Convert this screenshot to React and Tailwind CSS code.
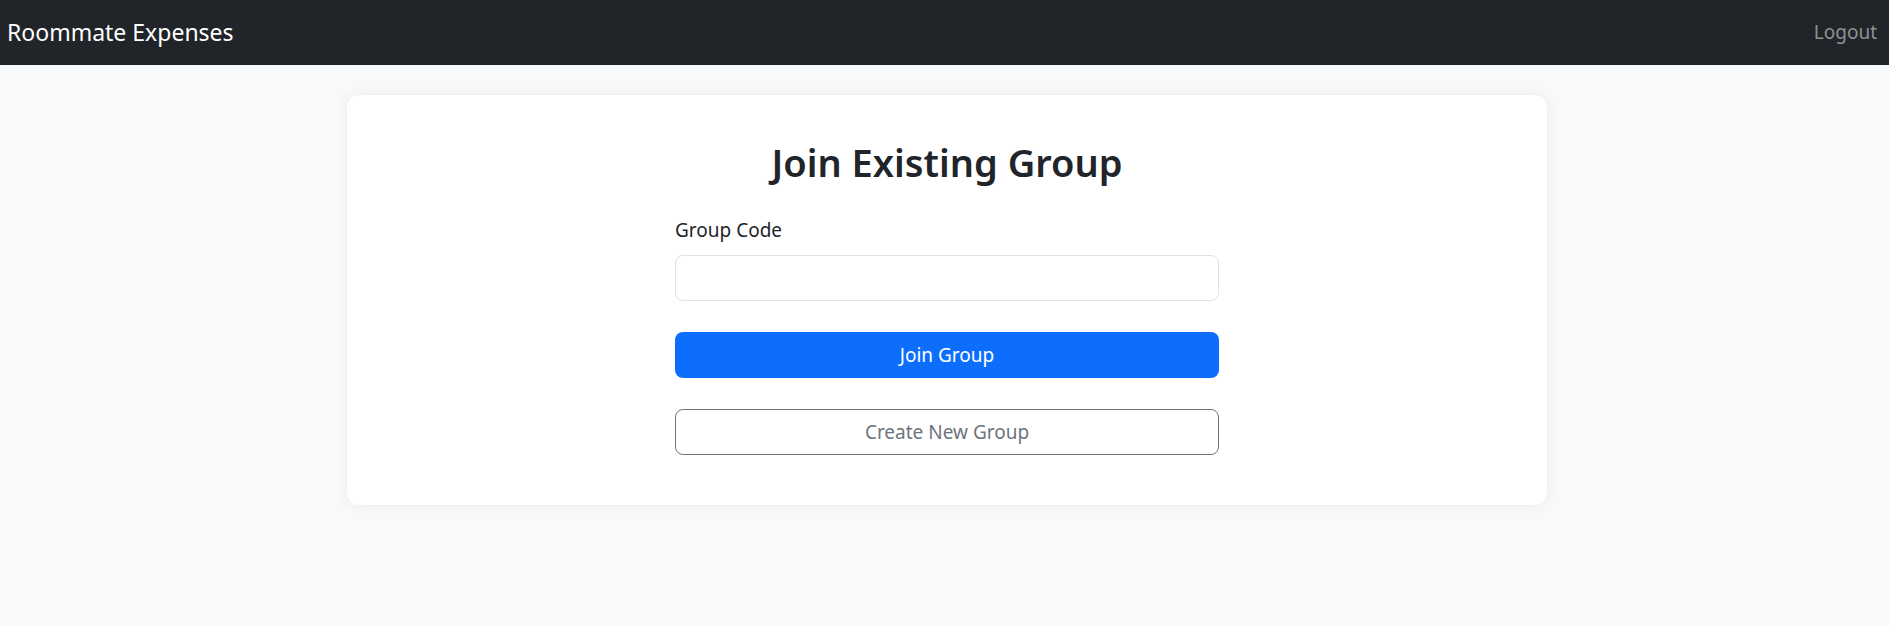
export default function App() {
  return (
    <div className="min-h-[626px] bg-[#f8f9fa] font-['Noto_Sans',sans-serif] text-[#212529]">
      <nav className="h-[65px] bg-[#212529] flex items-center justify-between pl-[7px] pr-[12px]">
        <span className="text-white text-[23px] leading-none">Roommate Expenses</span>
        <span className="text-[#8f9194] text-[19px] leading-none">Logout</span>
      </nav>
      <main className="pt-[30px] flex justify-center pl-[5px]">
        <div className="w-[1200px] bg-white rounded-[12px] shadow-[0_0_12px_rgba(120,80,80,0.08)] pt-[43px] pb-[50px]">
          <h2 className="text-center text-[38px] leading-[48px] font-semibold">Join Existing Group</h2>
          <div className="w-[544px] mx-auto mt-[29px]">
            <label className="block text-[19px] leading-[30px] mb-[10px]">Group Code</label>
            <input className="block w-full h-[46px] border border-[#dee2e6] rounded-[8px] px-3 text-[19px] outline-none" />
            <button className="mt-[31px] w-full h-[46px] rounded-[8px] bg-[#0d6efd] text-white text-[19px]">Join Group</button>
            <button className="mt-[31px] w-full h-[46px] rounded-[8px] border border-[#6c757d] bg-white text-[#6c757d] text-[19px]">Create New Group</button>
          </div>
        </div>
      </main>
    </div>
  );
}
